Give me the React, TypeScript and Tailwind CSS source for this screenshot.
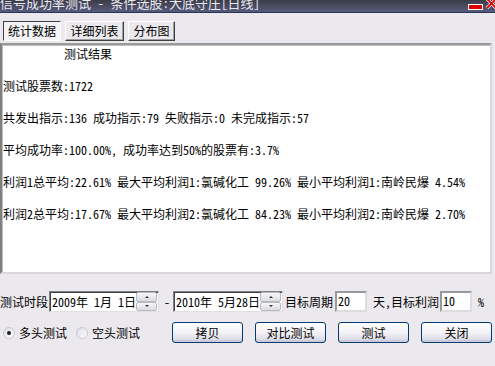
import React from 'react';

const FONT = { fontFamily: '"Noto Sans Mono CJK SC", "Noto Sans CJK SC", monospace' };

function Tab({ label, active }: { label: string; active?: boolean }) {
  return (
    <div
      className={`h-[20px] flex items-center justify-center text-[12px] text-black border ${
        active
          ? 'border-t-[#404040] border-l-[#404040] border-b-white border-r-white bg-[#f4f3f5]'
          : 'border-t-white border-l-white border-b-[#404040] border-r-[#404040] bg-[#ebe9ed] shadow-[inset_-1px_-1px_0_#a0a0a0]'
      }`}
    >
      {label}
    </div>
  );
}

function Spinner() {
  return (
    <div className="w-[21px] h-[19px] flex flex-col ml-auto">
      <div className="flex-1 bg-gradient-to-b from-[#f7f7f7] to-[#dcdce2] border border-[#b9b9c3] rounded-[2px] flex items-center justify-center">
        <div className="w-0 h-0 border-l-[2px] border-r-[2px] border-b-[2px] border-l-transparent border-r-transparent border-b-[#333]" />
      </div>
      <div className="flex-1 bg-gradient-to-b from-[#f7f7f7] to-[#dcdce2] border border-[#b9b9c3] rounded-[2px] flex items-center justify-center">
        <div className="w-0 h-0 border-l-[2px] border-r-[2px] border-t-[2px] border-l-transparent border-r-transparent border-t-[#333]" />
      </div>
    </div>
  );
}

function DateBox({ value }: { value: string }) {
  return (
    <div className="w-[110px] h-[21px] bg-white border border-t-[#808080] border-l-[#808080] border-b-[#e0e0e0] border-r-[#e0e0e0] shadow-[inset_1px_1px_0_#404040] flex items-center pl-[2px] pr-[1px] text-[12px]">
      <span className="whitespace-pre">{value}</span>
      <Spinner />
    </div>
  );
}

function NumBox({ value, w }: { value: string; w: string }) {
  return (
    <div className={`${w} h-[21px] bg-white border-2 border-t-[#999] border-l-[#999] border-b-[#ddd] border-r-[#ddd] flex items-start pl-[1px] text-[12px] leading-[16px]`}>
      {value}
    </div>
  );
}

function XpButton({ label }: { label: string }) {
  return (
    <button className="w-[71px] h-[21px] rounded-[3px] border border-[#003c74] bg-gradient-to-b from-white via-[#f3f3f7] to-[#d6d3e2] text-[12px] text-black flex items-center justify-center shadow-[inset_0_-2px_0_#cdcbdc]">
      {label}
    </button>
  );
}

function Radio({ label, checked }: { label: string; checked?: boolean }) {
  return (
    <div className="flex items-center gap-[4px] text-[12px]">
      <div className="w-[12px] h-[12px] rounded-full border border-[#c8c8d0] bg-gradient-to-br from-[#dcdce4] to-white flex items-center justify-center">
        {checked && <div className="w-[4px] h-[4px] rounded-full bg-[#202020]" />}
      </div>
      <span>{label}</span>
    </div>
  );
}

export default function App() {
  const lines = [
    '测试股票数:1722',
    '共发出指示:136 成功指示:79 失败指示:0 未完成指示:57',
    '平均成功率:100.00%, 成功率达到50%的股票有:3.7%',
    '利润1总平均:22.61% 最大平均利润1:氯碱化工 99.26% 最小平均利润1:南岭民爆 4.54%',
    '利润2总平均:17.67% 最大平均利润2:氯碱化工 84.23% 最小平均利润2:南岭民爆 2.70%',
  ];

  return (
    <div className="w-[495px] h-[366px] bg-[#ebe9ed] overflow-hidden flex flex-col text-black" style={FONT}>
      {/* Title bar */}
      <div className="relative h-[13px] bg-gradient-to-b from-[#3b3c46] to-[#575a7c] border-b border-[#2a3656] overflow-hidden">
        <div className="absolute left-0 top-[-5px] text-[13px] text-[#e8e8f0] whitespace-nowrap leading-[16px]">
          信号成功率测试 - 条件选股:大底守庄[日线]
        </div>
        <svg className="absolute left-[468px] top-[4px]" width="15" height="6" viewBox="0 0 15 6">
          <rect x="0.5" y="0.5" width="14" height="5" fill="#e00000" stroke="#ffffff" />
        </svg>
        <svg className="absolute left-[486px] top-[-2px]" width="11" height="11" viewBox="0 0 11 11">
          <path d="M1 1 L10 10 M10 1 L1 10" stroke="#ffffff" strokeWidth="3.2" />
          <path d="M1 1 L10 10 M10 1 L1 10" stroke="#e00000" strokeWidth="1.8" />
        </svg>
      </div>

      {/* Tabs */}
      <div className="flex gap-[4px] pl-[3px] mt-[8px]">
        <div className="w-[58px]"><Tab label="统计数据" active /></div>
        <div className="w-[59px]"><Tab label="详细列表" /></div>
        <div className="w-[47px]"><Tab label="分布图" /></div>
      </div>

      {/* Result area */}
      <div className="mt-[2px] w-[492px] h-[231px] bg-white border-2 border-t-[#9a9a9a] border-l-[#808080] border-r-[#d8d8dc] border-b-[#d8d8dc] shadow-[inset_1px_1px_0_#c0c0c0] text-[12px] leading-[18px] flex flex-col gap-[14px] pl-[1px]">
        <div className="pl-[61px]">测试结果</div>
        {lines.map(l => (
          <div key={l} className="whitespace-pre">{l}</div>
        ))}
      </div>

      {/* Period row */}
      <div className="mt-[17px] flex items-center text-[12px] h-[21px]">
        <span className="w-[49px]">测试时段</span>
        <DateBox value="2009年 1月 1日" />
        <span className="ml-[5px] w-[9px]">-</span>
        <DateBox value="2010年 5月28日" />
        <span className="ml-[2px] w-[50px]">目标周期</span>
        <NumBox value="20" w="w-[32px]" />
        <span className="ml-[6px] w-[67px] whitespace-pre">天,目标利润</span>
        <NumBox value="10" w="w-[32px]" />
        <span className="ml-[6px]">%</span>
      </div>

      {/* Actions row */}
      <div className="mt-[10px] flex items-center h-[21px]">
        <div className="flex items-center gap-[9px] pl-[3px] w-[172px]">
          <Radio label="多头测试" checked />
          <Radio label="空头测试" />
        </div>
        <div className="flex gap-[12px]">
          <XpButton label="拷贝" />
          <XpButton label="对比测试" />
          <XpButton label="测试" />
          <XpButton label="关闭" />
        </div>
      </div>
    </div>
  );
}
